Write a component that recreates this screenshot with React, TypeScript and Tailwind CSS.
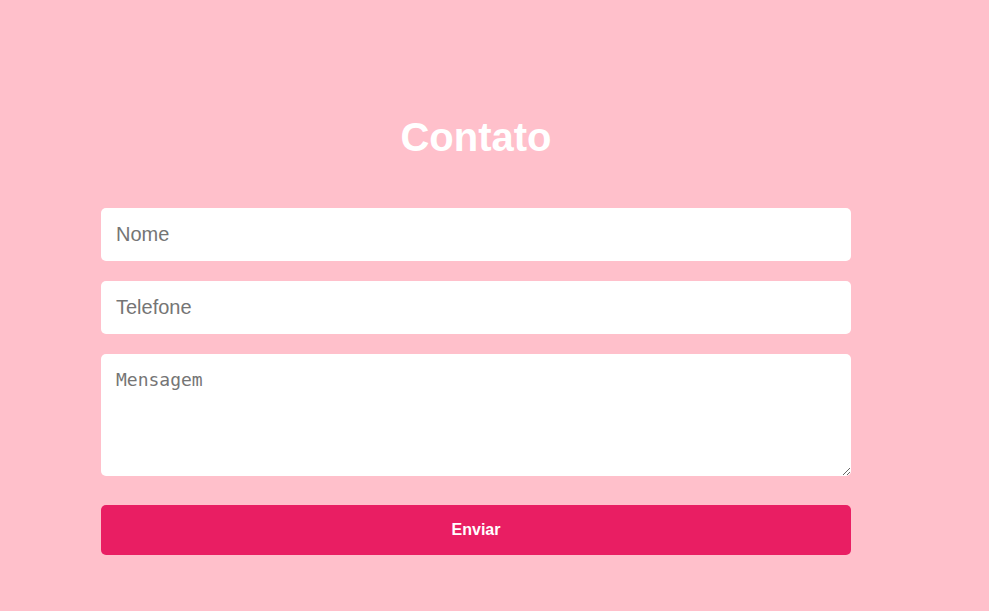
export default function App() {
  return (
    <div className="min-h-screen w-full bg-[#ffc0cb] pt-[114px] pl-[101px] font-['Liberation_Sans',Arial,sans-serif]">
      <div className="w-[750px]">
        <h1 className="text-center text-[40px] leading-[46px] font-bold text-white">Contato</h1>
        <form className="mt-[48px] flex flex-col" onSubmit={(e) => e.preventDefault()}>
          <input
            type="text"
            placeholder="Nome"
            className="h-[53px] w-full rounded-[5px] bg-white px-[15px] text-[20px] text-[#333] placeholder:text-[#757575] outline-none"
          />
          <input
            type="tel"
            placeholder="Telefone"
            className="mt-[20px] h-[53px] w-full rounded-[5px] bg-white px-[15px] text-[20px] text-[#333] placeholder:text-[#757575] outline-none"
          />
          <textarea
            placeholder="Mensagem"
            className="mt-[20px] h-[122px] w-full rounded-[5px] bg-white p-[15px] font-['DejaVu_Sans_Mono',monospace] text-[18px] leading-[22px] text-[#333] placeholder:text-[#757575] outline-none"
          />
          <button
            type="submit"
            className="mt-[29px] h-[50px] w-full rounded-[5px] bg-[#e91e63] text-[16px] font-bold text-white"
          >
            Enviar
          </button>
        </form>
      </div>
    </div>
  );
}
